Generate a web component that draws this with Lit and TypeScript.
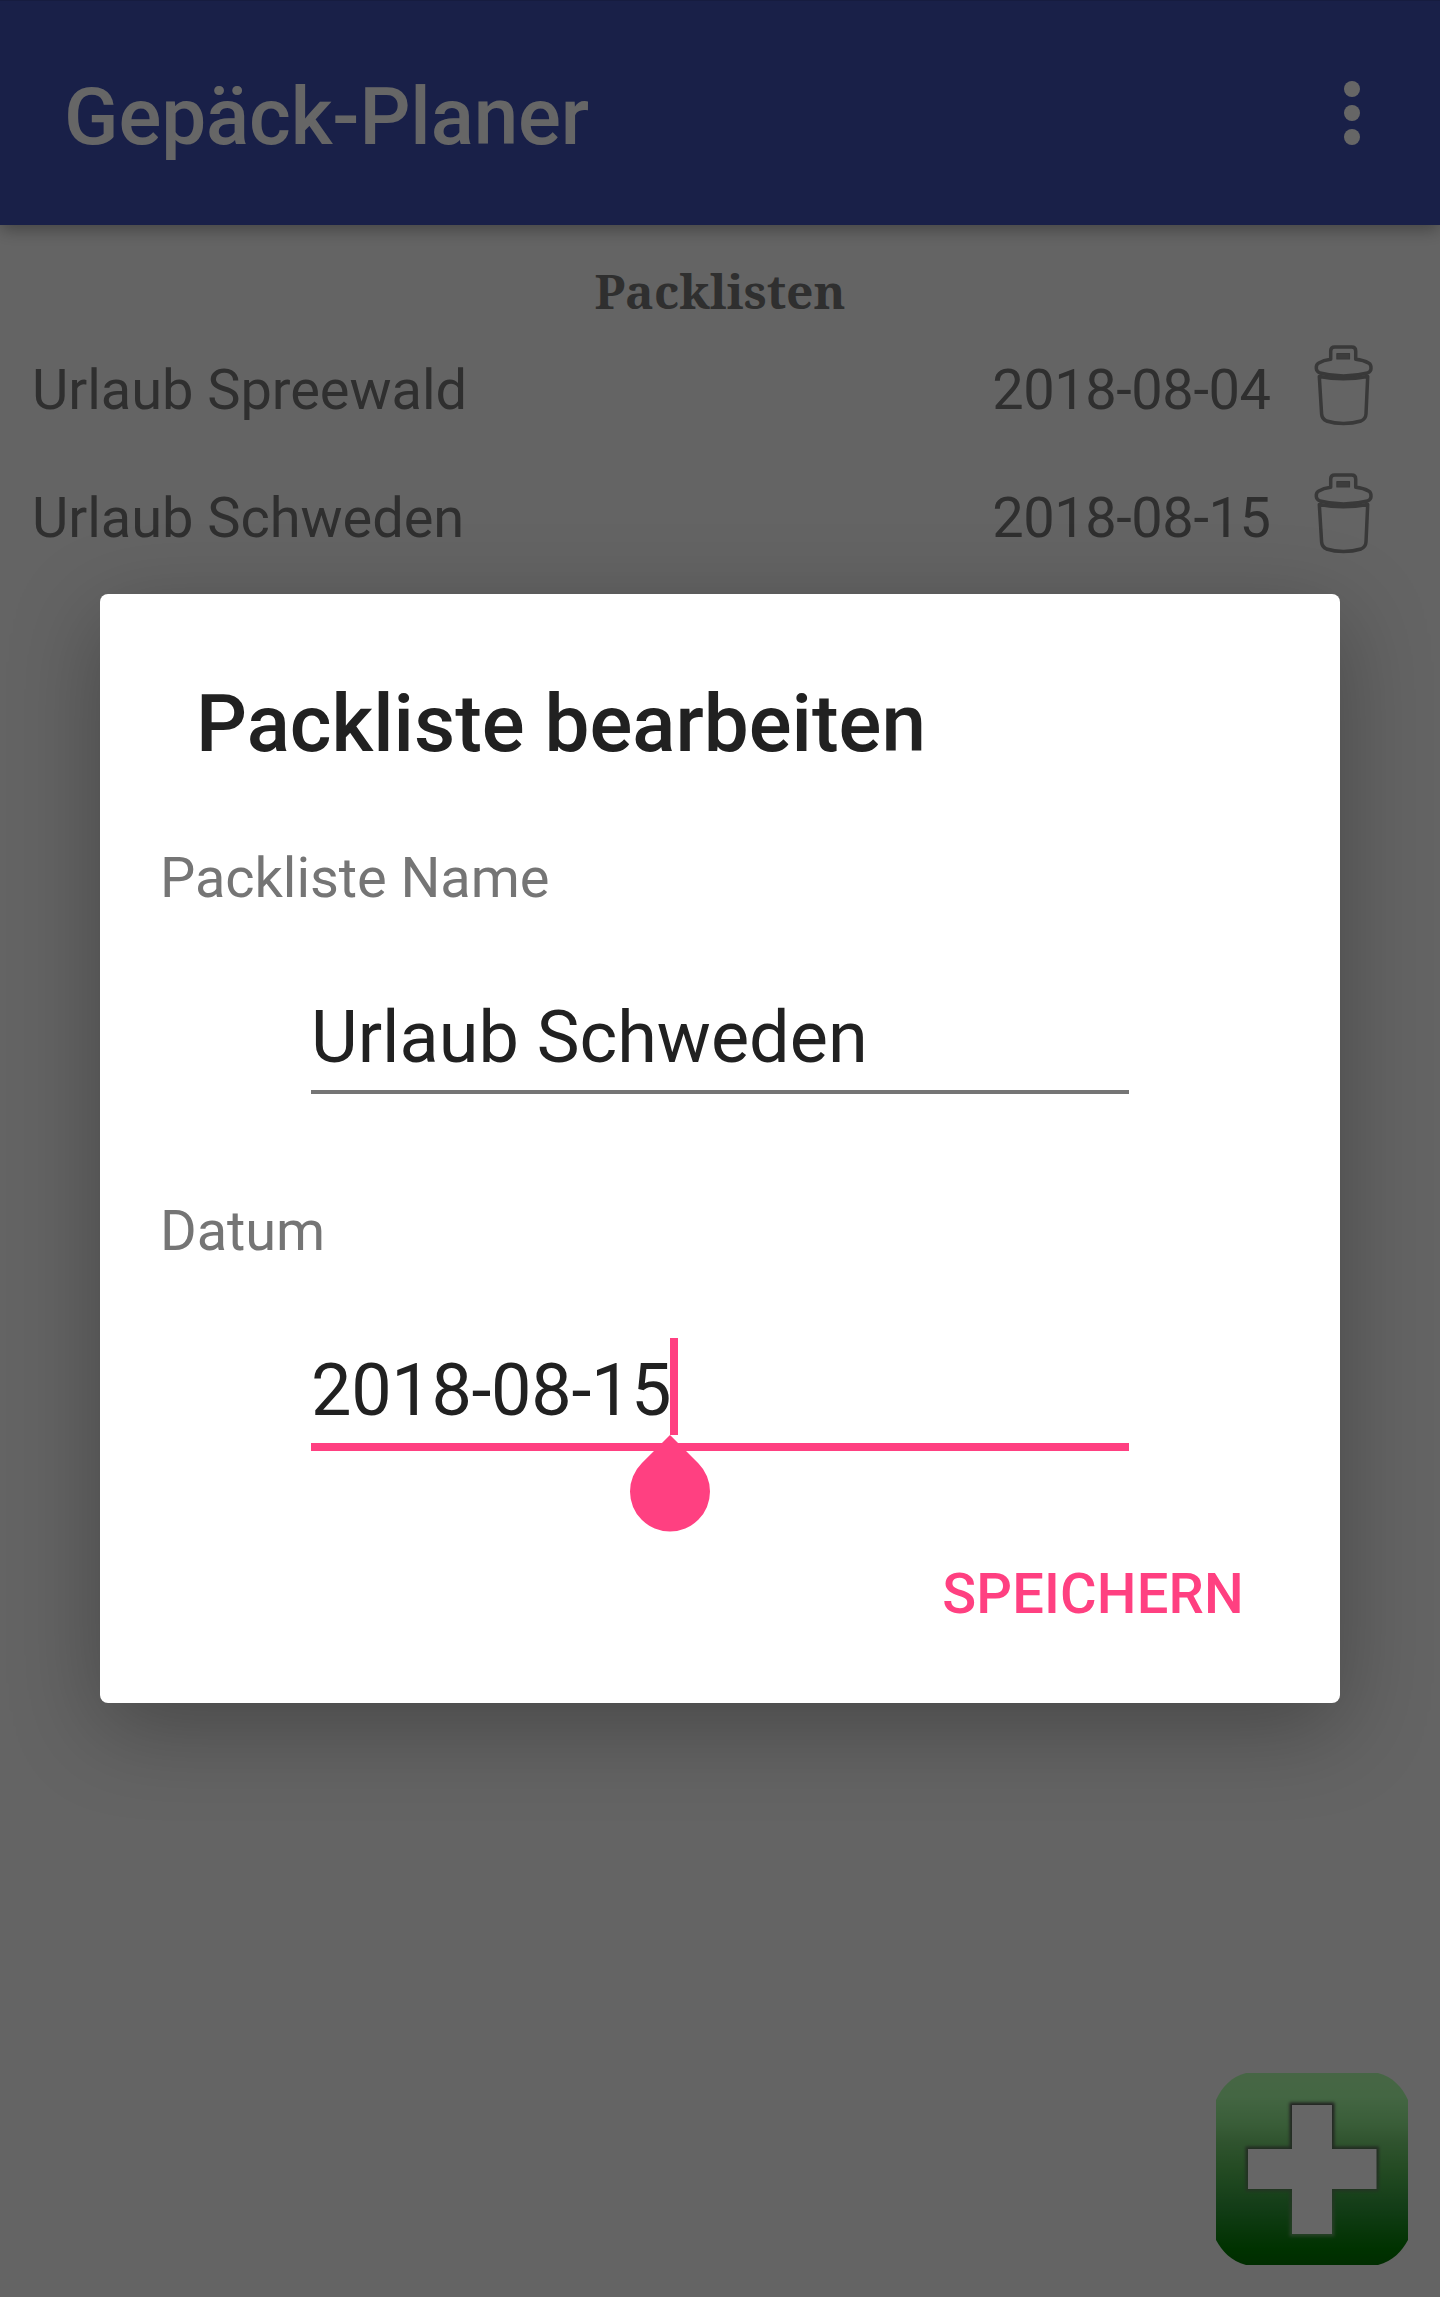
import { LitElement, html, css } from "lit";
import { customElement, property } from "lit/decorators.js";

@customElement("trash-icon")
class TrashIcon extends LitElement {
  static styles = css`
    :host { display: block; width: 60px; height: 82px; }
    svg { display: block; }
  `;
  render() {
    return html`<svg width="60" height="82" viewBox="0 0 60 82" fill="none" stroke="#8e8e8e" stroke-width="3.5" stroke-linejoin="round">
      <path d="M16.700 14.300V6Q16.700 2 20.700 2H37.700Q41.700 2 41.700 6V14.300Q49.500 15 55 18.200Q57.200 19.500 57 23.500Q57 26.500 53.500 28Q42 31 29.500 31Q17 31 6 28Q2.500 26.500 2.300 23.500Q2 19.500 4.300 18.200Q9.500 15 16.700 14.300Z"/>
      <path d="M5.300 31.500Q29 36 53.700 31.500L52 69Q51.700 74 47 76Q39 78.500 29.500 78.500Q20 78.500 12.500 76Q8 74 7.600 69Z"/>
      <path d="M22.900 8.500H35.500V14H22.900Z" fill="#989898" stroke-width="1.200"/>
    </svg>`;
  }
}

@customElement("pack-row")
class PackRow extends LitElement {
  @property() name = "";
  @property() date = "";
  static styles = css`
    :host { display: flex; align-items: center; height: 128px; padding: 0 66px 0 32px; box-sizing: border-box;
      font-size: 56px; line-height: 128px; color: #757575; }
    .name { flex: 1; letter-spacing: -0.05px; }
    .date { margin-right: 43.5px; letter-spacing: -0.44px; }
    trash-icon { margin-bottom: 8px; }
  `;
  render() {
    return html`<span class="name">${this.name}</span><span class="date">${this.date}</span><trash-icon></trash-icon>`;
  }
}

@customElement("text-field")
class TextField extends LitElement {
  @property() label = "";
  @property() value = "";
  @property({ type: Boolean, reflect: true }) focused = false;
  static styles = css`
    :host { display: block; height: 353px; }
    .label { font-size: 56px; line-height: 66px; color: #757575; padding-left: 60px; letter-spacing: -0.08px; }
    .box { margin: 67px 211px 0; height: 112px; box-sizing: border-box; color: #212121;
      font-size: 72px; line-height: 96px; padding-top: 12px; white-space: nowrap; }
    .text { position: relative; display: inline-block; height: 96px; }
    :host([focused]) .text { letter-spacing: -0.33px; }
    .line { height: 4px; margin: 0 211px; background: #757575; }
    :host([focused]) .line { height: 8px; background: #ff4081; }
    .caret { position: absolute; left: calc(100% - 1px); top: -5px; width: 8px; height: 97px; background: #ff4081; }
    .handle { position: absolute; left: calc(100% - 41px); top: 92px; z-index: 1; }
  `;
  render() {
    return html`<div class="label">${this.label}</div>
      <div class="box"><span class="text">${this.value}${this.focused
        ? html`<i class="caret"></i><svg class="handle" width="80" height="97" viewBox="0 0 80 97"><path fill="#ff4081" d="M40 0L68.284 28.284A40 40 0 1 1 11.716 28.284Z"/></svg>`
        : null}</span></div>
      <div class="line"></div>`;
  }
}

const PLUS = "M76 32H116V76H160.500V116H116V161H76V116H32V76H76Z";

@customElement("app-root")
class AppRoot extends LitElement {
  static styles = css`
    :host { display: block; position: relative; width: 1440px; height: 2297px; overflow: hidden;
      background: #fafafa; font-family: Roboto, sans-serif; }
    .screen { display: flex; flex-direction: column; height: 100%; }
    .bar { display: flex; align-items: center; justify-content: space-between; height: 225px; box-sizing: border-box;
      padding: 8px 80px 0 64px; background: #3f51b5; color: #fff; border-top: 1px solid #37479f;
      box-shadow: 0 5px 16px -1px rgba(0, 0, 0, 0.34); }
    .title { font-size: 80px; line-height: 94px; font-weight: 500; letter-spacing: -0.1px; }
    .dots { display: flex; flex-direction: column; gap: 8px; margin-bottom: 8px; }
    .dots i { width: 16px; height: 16px; border-radius: 50%; background: #fff; }
    .heading { height: 101px; line-height: 131px; text-align: center; font-family: "Noto Serif", "Droid Serif", "DejaVu Serif", serif;
      font-weight: 700; font-size: 48px; color: #757575; }
    .fab { margin: auto 32px 32px auto; display: block; }
    .scrim { position: absolute; inset: 0; display: flex; align-items: center; justify-content: center; background: rgba(0, 0, 0, 0.6); }
    .dialog { width: 1240px; height: 1109px; box-sizing: border-box; background: #fff; border-radius: 8px; padding-top: 83px;
      box-shadow: 0 24px 90px rgba(0, 0, 0, 0.29); }
    .dialog-title { font-size: 80px; line-height: 94px; font-weight: 500; color: #212121; padding-left: 96px; margin-bottom: 74px; }
    .actions { display: flex; justify-content: flex-end; padding-right: 96px; margin-top: 10px; }
    .save { font-size: 56px; line-height: 66px; font-weight: 500; color: #ff4081; letter-spacing: 0.2px; }
  `;
  render() {
    return html`
      <div class="screen">
        <div class="bar">
          <span class="title">Gepäck-Planer</span>
          <div class="dots"><i></i><i></i><i></i></div>
        </div>
        <div class="heading">Packlisten</div>
        <pack-row name="Urlaub Spreewald" date="2018-08-04"></pack-row>
        <pack-row name="Urlaub Schweden" date="2018-08-15"></pack-row>
        <svg class="fab" width="192" height="192" viewBox="0 0 192 192">
          <defs>
            <linearGradient id="g" x1="0" y1="0" x2="0" y2="1">
              <stop offset="0" stop-color="#b0ffac"/><stop offset="0.12" stop-color="#aaffa8"/>
              <stop offset="0.27" stop-color="#8fe88c"/><stop offset="0.36" stop-color="#78d075"/>
              <stop offset="0.5" stop-color="#5abb58"/><stop offset="0.7" stop-color="#30983a"/>
              <stop offset="0.92" stop-color="#007d00"/><stop offset="1" stop-color="#007000"/>
            </linearGradient>
            <linearGradient id="s" x1="0" y1="0" x2="0" y2="1">
              <stop offset="0" stop-color="#555"/><stop offset="0.6" stop-color="#557f55"/><stop offset="1" stop-color="#5fa05f"/>
            </linearGradient>
            <filter id="b"><feGaussianBlur stdDeviation="1.4"/></filter>
          </defs>
          <path fill="url(#g)" d="M0 27C6 14 15 4 30 0H162C177 4 186 14 192 27V167C186 178 177 188 162 192H30C15 188 6 178 0 167Z"/>
          <path d=${PLUS} fill="none" stroke="url(#s)" stroke-width="5" filter="url(#b)"/>
          <path d=${PLUS} fill="#fff"/>
        </svg>
      </div>
      <div class="scrim">
        <div class="dialog">
          <div class="dialog-title">Packliste bearbeiten</div>
          <text-field label="Packliste Name" value="Urlaub Schweden"></text-field>
          <text-field label="Datum" value="2018-08-15" focused></text-field>
          <div class="actions"><span class="save">SPEICHERN</span></div>
        </div>
      </div>`;
  }
}
